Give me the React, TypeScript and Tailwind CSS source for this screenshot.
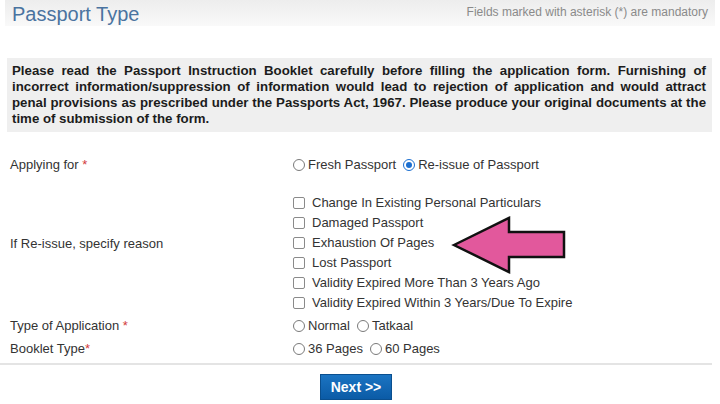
import React from "react";

/* ------------------------------------------------------------------ */
/* Small form controls drawn with spans (closer to the screenshot)     */
/* ------------------------------------------------------------------ */

function Radio({ label, checked = false }: { label: string; checked?: boolean }) {
  return (
    <span className="flex items-center mr-[7px]">
      {checked ? (
        <span className="w-[12px] h-[12px] rounded-full border-[1.5px] border-[#1c6fd0] bg-white flex items-center justify-center shrink-0">
          <span className="w-[6px] h-[6px] rounded-full bg-[#1c6fd0]" />
        </span>
      ) : (
        <span className="w-[12px] h-[12px] rounded-full border border-[#7a7a7a] bg-white shrink-0" />
      )}
      <span className="ml-[3px]">{label}</span>
    </span>
  );
}

function Checkbox({ label }: { label: string }) {
  return (
    <div className="h-[20px] flex items-center">
      <span className="w-[12px] h-[12px] rounded-[2px] border border-[#8a8a8a] bg-white shrink-0" />
      <span className="ml-[7px]">{label}</span>
    </div>
  );
}

function Label({ text, star }: { text: string; star?: string }) {
  return (
    <span>
      {text}
      {star && <span className="text-[#d23b3b]">{star}</span>}
    </span>
  );
}

const reasons = [
  "Change In Existing Personal Particulars",
  "Damaged Passport",
  "Exhaustion Of Pages",
  "Lost Passport",
  "Validity Expired More Than 3 Years Ago",
  "Validity Expired Within 3 Years/Due To Expire",
];

export default function App() {
  return (
    <div className="relative w-[720px] h-[404px] overflow-hidden bg-white text-[#333] font-['Liberation_Sans',Arial,sans-serif]">
      {/* Header */}
      <div className="mx-[5px] h-[26px] flex items-start justify-between bg-gradient-to-b from-[#ededed] to-[#f9f9f9]">
        <h1 className="pl-[7px] pt-[2px] text-[20px] leading-[24px] text-[#4a73a0]">
          Passport Type
        </h1>
        <p className="pr-[7px] pt-[5px] text-[12px] leading-[14px] text-[#8a8a8a]">
          Fields marked with asterisk (*) are mandatory
        </p>
      </div>

      {/* Instruction notice */}
      <div className="mt-[32px] ml-[7px] w-[705px] bg-[#efefef] pl-[5px] pr-[6px] py-[5px]">
        <p className="text-[13.25px] leading-[16px] font-bold text-justify text-[#1c1c1c]">
          Please read the Passport Instruction Booklet carefully before filling the
          application form. Furnishing of incorrect information/suppression of
          information would lead to rejection of application and would attract penal
          provisions as prescribed under the Passports Act, 1967. Please produce your
          original documents at the time of submission of the form.
        </p>
      </div>

      {/* Form */}
      <div className="text-[13px] leading-[16px] px-[10px]">
        <div className="mt-[23px] h-[20px] flex items-center">
          <div className="w-[283px]">
            <Label text="Applying for " star="*" />
          </div>
          <div className="flex items-center">
            <Radio label="Fresh Passport" />
            <Radio label="Re-issue of Passport" checked />
          </div>
        </div>

        <div className="mt-[18px] flex">
          <div className="w-[283px] pt-[43px]">If Re-issue, specify reason</div>
          <div className="flex flex-col">
            {reasons.map((r) => (
              <Checkbox key={r} label={r} />
            ))}
          </div>
        </div>

        <div className="mt-[1px] h-[23px] flex items-center">
          <div className="w-[283px]">
            <Label text="Type of Application " star="*" />
          </div>
          <div className="flex items-center">
            <Radio label="Normal" />
            <Radio label="Tatkaal" />
          </div>
        </div>

        <div className="h-[23px] flex items-center">
          <div className="w-[283px]">
            <Label text="Booklet Type" star="*" />
          </div>
          <div className="flex items-center">
            <Radio label="36 Pages" />
            <Radio label="60 Pages" />
          </div>
        </div>
      </div>

      <div className="mt-[3px] w-[712px] h-[2px] bg-[#e4e4e4]" />

      <div className="mt-[9px] w-[712px] flex justify-center">
        <button className="h-[26px] w-[72px] border border-[#0a4f8f] bg-gradient-to-b from-[#1b74c2] to-[#0b5ba6] text-white text-[14px] font-bold leading-[24px]">
          Next &gt;&gt;
        </button>
      </div>

      {/* Pink annotation arrow */}
      <svg
        className="absolute left-0 top-0 pointer-events-none"
        width="720"
        height="404"
        viewBox="0 0 720 404"
      >
        <polygon
          points="454,245 509,218 509,232 564,232 564,257 509,257 509,272"
          fill="#e2589c"
          stroke="#111"
          strokeWidth="2.5"
          strokeLinejoin="miter"
        />
      </svg>
    </div>
  );
}
